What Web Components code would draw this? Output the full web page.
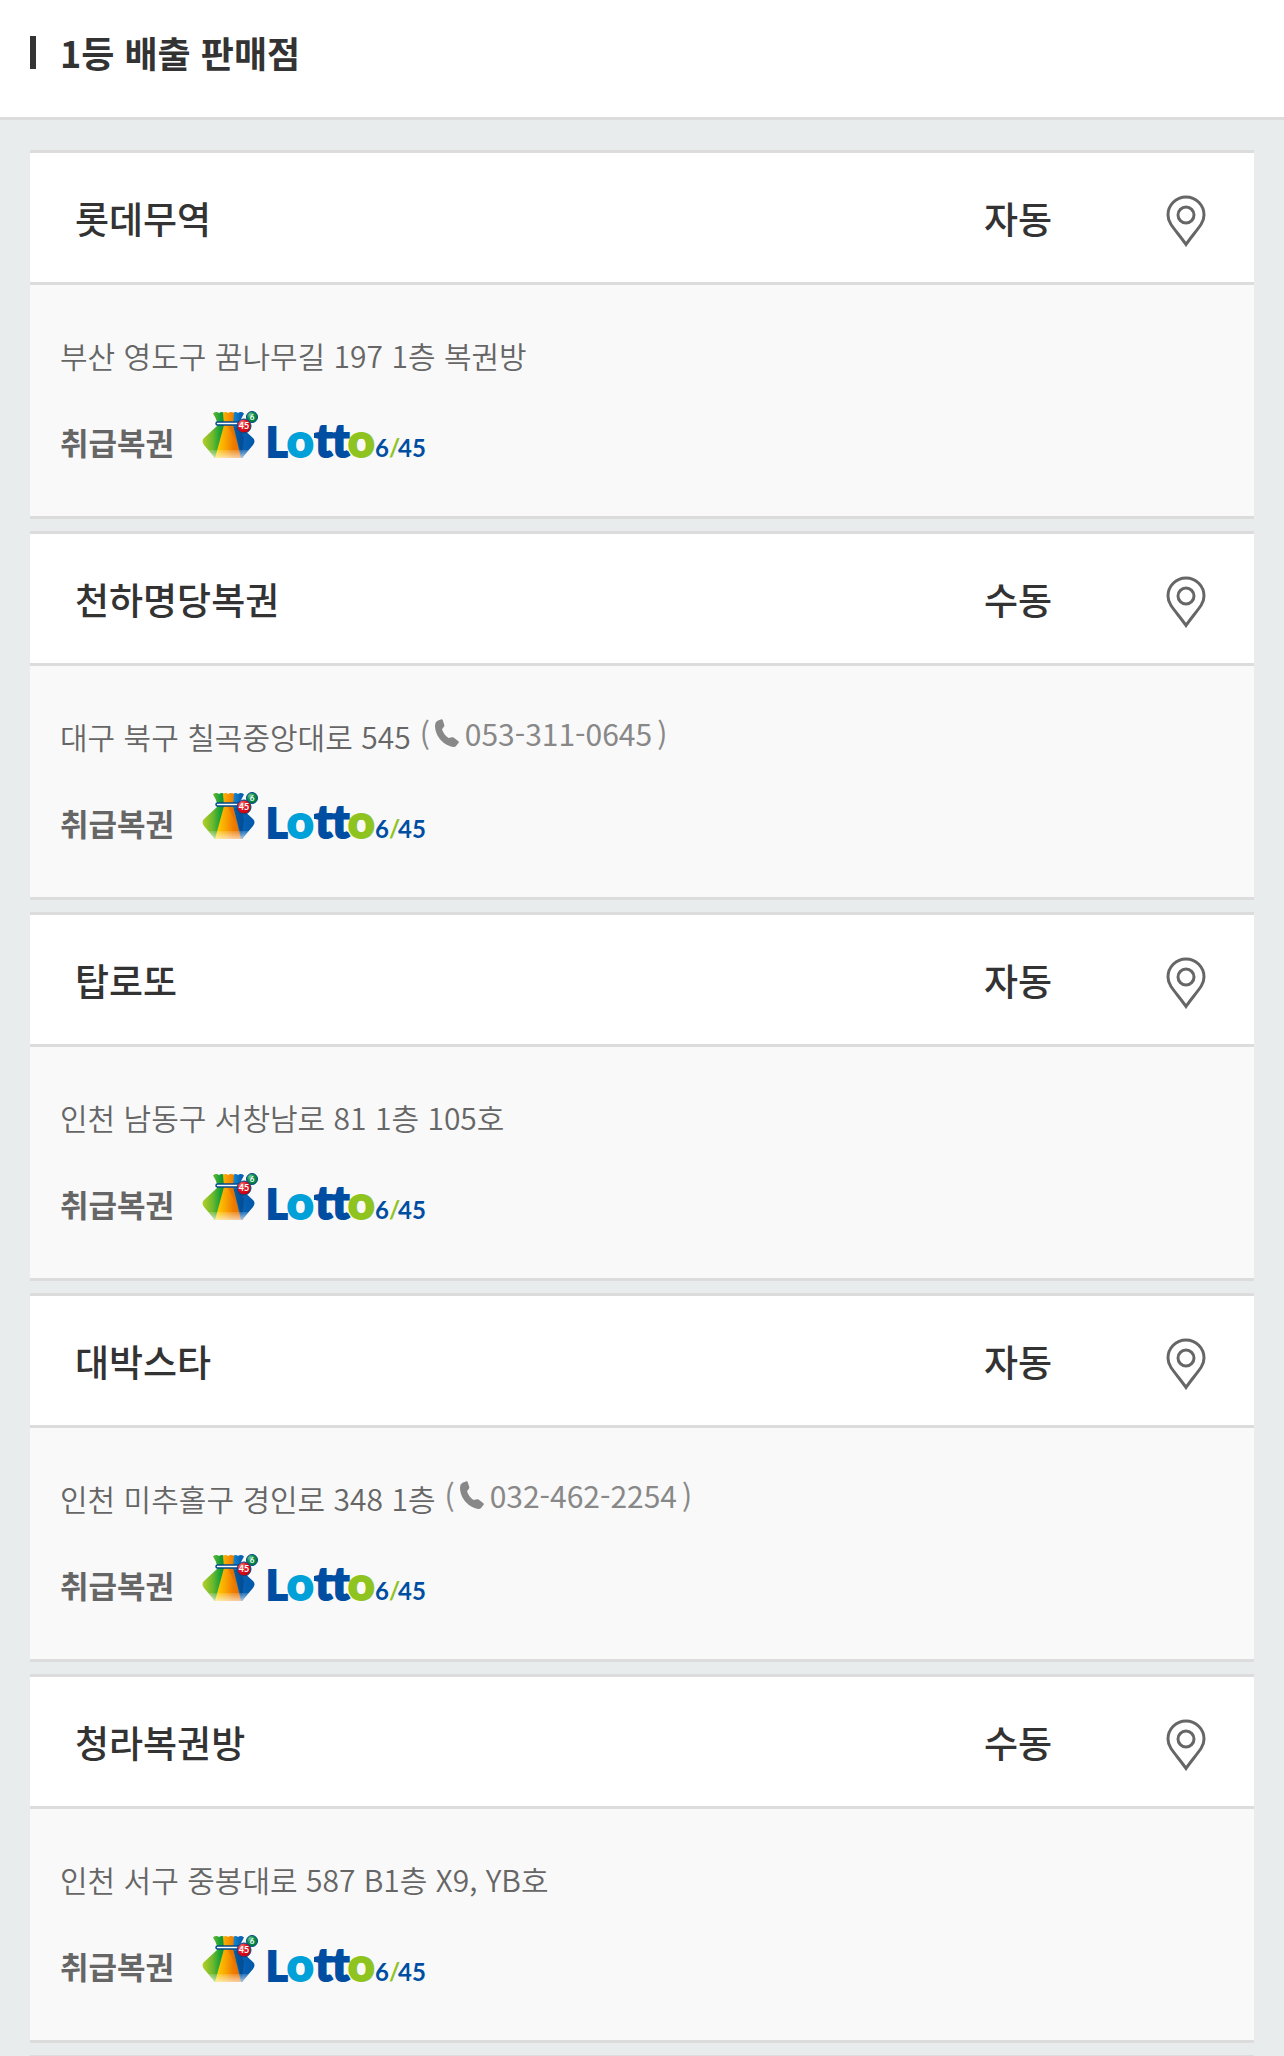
<!DOCTYPE html>
<html lang="ko">
<head>
<meta charset="utf-8">
<meta name="viewport" content="width=device-width, initial-scale=1">
<title>1등 배출 판매점</title>
<style>
  body {
    margin: 0;
    background: #e9eced;
    color: #333;
    font-family: "Noto Sans CJK KR", "Noto Sans", sans-serif;
  }
</style>
</head>
<body>
<section-title>1등 배출 판매점</section-title>

<store-list>
  <store-card type="자동">
    <span slot="name">롯데무역</span>
    <span slot="address">부산 영도구 꿈나무길 197 1층 복권방</span>
  </store-card>
  <store-card type="수동" tel="053-311-0645">
    <span slot="name">천하명당복권</span>
    <span slot="address">대구 북구 칠곡중앙대로 545</span>
  </store-card>
  <store-card type="자동">
    <span slot="name">탑로또</span>
    <span slot="address">인천 남동구 서창남로 81 1층 105호</span>
  </store-card>
  <store-card type="자동" tel="032-462-2254">
    <span slot="name">대박스타</span>
    <span slot="address">인천 미추홀구 경인로 348 1층</span>
  </store-card>
  <store-card type="수동">
    <span slot="name">청라복권방</span>
    <span slot="address">인천 서구 중봉대로 587 B1층 X9, YB호</span>
  </store-card>
</store-list>

<script>
class SectionTitle extends HTMLElement {
  constructor() {
    super();
    this.attachShadow({ mode: 'open' });
    this.shadowRoot.innerHTML = `
      <style>
        :host {
          display: block;
          padding: 28px 30px 41px;
          background: #fff;
          border-bottom: 3px solid #dcdcdc;
        }
        h2 {
          display: flex;
          align-items: center;
          gap: 24px;
          margin: 0;
          font-size: 36px;
          line-height: 48px;
          font-weight: 700;
        }
        h2::before {
          content: "";
          width: 6px;
          height: 33px;
          background: #333;
        }
      </style>
      <h2><slot></slot></h2>
    `;
  }
}

customElements.define('section-title', SectionTitle);

class StoreList extends HTMLElement {
  constructor() {
    super();
    this.attachShadow({ mode: 'open' });
    this.shadowRoot.innerHTML = `
      <style>
        :host {
          display: flex;
          flex-direction: column;
          gap: 12px;
          padding: 30px 30px 0;
        }
        .end {
          height: 1px;
          background: #dcdcdc;
        }
      </style>
      <slot></slot>
      <div class="end"></div>
    `;
  }
}

customElements.define('store-list', StoreList);

class MapButton extends HTMLElement {
  constructor() {
    super();
    this.attachShadow({ mode: 'open' });
    this.shadowRoot.innerHTML = `
      <style>
        :host {
          display: flex;
          justify-content: center;
        }
        button {
          display: flex;
          padding: 0;
          border: 0;
          background: none;
          cursor: pointer;
        }
      </style>
      <button type="button" aria-label="지도 보기">
        <svg width="40" height="58" viewBox="0 -6 40 58" fill="none" stroke="#666" stroke-width="3">
          <path d="M20 49.500C16 43.500 9.500 36 5 29.500C2.800 26.300 2 23.600 2 20C2 10 10 2 20 2S38 10 38 20C38 23.600 37.200 26.300 35 29.500C30.500 36 24 43.500 20 49.500Z"/>
          <circle cx="20" cy="20" r="8"/>
        </svg>
      </button>
    `;
  }
}

customElements.define('map-button', MapButton);

class PhoneLink extends HTMLElement {
  constructor() {
    super();
    this.attachShadow({ mode: 'open' });
  }

  static get observedAttributes() {
    return ['number'];
  }

  attributeChangedCallback(name, oldValue, newValue) {
    this.shadowRoot.innerHTML = `
      <style>
        :host {
          display: flex;
          align-items: center;
          gap: 5px;
          color: #888;
          font-size: 30px;
          line-height: 40px;
          font-weight: 400;
        }
        a {
          display: flex;
          align-items: center;
          gap: 6px;
          color: inherit;
          text-decoration: none;
        }
      </style>
      <span>(</span>
      <a href="tel:${newValue}">
        <svg width="24" height="28" viewBox="0 0 24 28" fill="#888">
          <path d="M2.500 1.700L6.500 0.200Q7.400 0 7.700 0.900L9.300 6Q9.500 7 8.900 7.700L7 10.200C8 13.500 10.500 17 13.500 19L17 18.200Q17.900 18 18.600 18.600L23.400 22.300Q24.200 23 23.500 23.900L21 27Q20.300 27.900 19 27.900C9 27 0 17.500 0 6.500Q0 3 2.500 1.700Z"/>
        </svg>
        <span>${newValue}</span>
      </a>
      <span>)</span>
    `;
  }
}

customElements.define('phone-link', PhoneLink);

class LottoLogo extends HTMLElement {
  constructor() {
    super();
    this.attachShadow({ mode: 'open' });
    this.shadowRoot.innerHTML = `
      <style>
        :host {
          display: block;
        }
        svg {
          display: block;
          overflow: visible;
        }
        text {
          font-family: Lato, sans-serif;
          font-weight: 700;
        }
        .word {
          font-weight: 900;
          stroke-width: 2px;
        }
        .navy {
          fill: #004ea2;
          stroke: #004ea2;
        }
        .sky {
          fill: #00a0d8;
          stroke: #00a0d8;
        }
        .lime {
          fill: #8fc31f;
          stroke: #8fc31f;
        }
      </style>
      <svg width="224" height="48" viewBox="0 -1 224 48" role="img" aria-label="Lotto 6/45">
        <defs>
          <linearGradient id="green" x1="0" x2="1">
            <stop offset="0" stop-color="#b5cf28"/>
            <stop offset=".45" stop-color="#6fb92c"/>
            <stop offset=".8" stop-color="#12a038"/>
            <stop offset="1" stop-color="#128a3a"/>
          </linearGradient>
          <linearGradient id="orange" x1="0" x2="1">
            <stop offset="0" stop-color="#ffd800"/>
            <stop offset=".45" stop-color="#f8a000"/>
            <stop offset=".7" stop-color="#ef7d00"/>
            <stop offset="1" stop-color="#e86c00"/>
          </linearGradient>
          <linearGradient id="blue" x1="0" x2="1">
            <stop offset="0" stop-color="#1397dc"/>
            <stop offset=".4" stop-color="#0a62b4"/>
            <stop offset="1" stop-color="#0057a8"/>
          </linearGradient>
          <linearGradient id="shine" x1="0" x2="0" y1="0" y2="1">
            <stop offset="0" stop-color="#fff" stop-opacity=".15"/>
            <stop offset="1" stop-color="#fff" stop-opacity=".65"/>
          </linearGradient>
          <radialGradient id="red" cx=".35" cy=".3" r=".7">
            <stop offset="0" stop-color="#f58a80"/>
            <stop offset=".5" stop-color="#e3121f"/>
            <stop offset="1" stop-color="#c4000f"/>
          </radialGradient>
          <radialGradient id="ball" cx=".35" cy=".3" r=".7">
            <stop offset="0" stop-color="#7cc79a"/>
            <stop offset=".5" stop-color="#0b9149"/>
            <stop offset="1" stop-color="#007a3c"/>
          </radialGradient>
        </defs>
        <path fill="url(#green)" d="M11 2.500Q14 0 17 2Q20 0 22 2L23 15L14 47H13L2 34Q-1 30 2 27L15 15V11Q14 7 11 2.500Z"/>
        <path fill="url(#blue)" d="M31 2Q34 0 36 2Q39 0 42 2.500L38 10V15L51 27Q54 30 51 34L40 47H38L29 15Z"/>
        <path fill="#004486" d="M31 15L38 17L42 26L40 45Z" opacity=".6"/>
        <path fill="url(#orange)" d="M21 2Q24 0 26 2Q29 0 32 2L31 14L39 47H13L22 14Z"/>
        <path fill="#d95f00" d="M26 15L31 14L36 34Z" opacity=".4"/>
        <path fill="url(#shine)" d="M6 39H47L40 47H13Z"/>
        <rect x="14" y="11" width="25" height="3" rx="1.500" fill="#fff" stroke="#004a8c" stroke-width="1.500"/>
        <circle cx="50" cy="6" r="5.500" fill="url(#ball)" stroke="#004a8c"/>
        <text x="50" y="9" font-size="8" fill="#fff" text-anchor="middle">6</text>
        <circle cx="42" cy="15" r="7" fill="url(#red)" stroke="#004a8c"/>
        <text x="42" y="18" font-size="9" fill="#fff" text-anchor="middle">45</text>
        <rect x="112" y="22" width="33" height="5" fill="#004ea2"/>
        <text class="word" y="46" font-size="46"><tspan class="navy" x="64" font-size="41">L</tspan><tspan class="sky" x="85">o</tspan><tspan class="navy" x="113">t</tspan><tspan class="navy" x="130">t</tspan><tspan class="lime" x="146">o</tspan></text>
        <text y="46" font-size="24" fill="#004ea2"><tspan x="173">6</tspan><tspan x="187" fill="#8fc31f">/</tspan><tspan x="196">4</tspan><tspan x="210">5</tspan></text>
      </svg>
    `;
  }
}

customElements.define('lotto-logo', LottoLogo);

class StoreCard extends HTMLElement {
  constructor() {
    super();
    this.attachShadow({ mode: 'open' });
  }

  connectedCallback() {
    const tel = this.getAttribute('tel');
    this.shadowRoot.innerHTML = `
      <style>
        :host {
          display: block;
          border: solid #dcdcdc;
          border-width: 3px 0;
          background: #f9f9f9;
        }
        header {
          display: grid;
          grid-template-columns: 1fr 200px 136px;
          align-items: center;
          height: 129px;
          background: #fff;
          border-bottom: 3px solid #dcdcdc;
          font-size: 37px;
          line-height: 48px;
          font-weight: 500;
        }
        h3 {
          margin: 0;
          padding-left: 45px;
          font: inherit;
        }
        .type {
          text-align: center;
        }
        .body {
          padding: 47px 30px 58px;
          color: #666;
        }
        .address {
          display: flex;
          align-items: flex-start;
          gap: 9px;
          font-size: 30px;
          line-height: 46px;
          font-weight: 350;
        }
        .games {
          display: flex;
          align-items: flex-end;
          gap: 28px;
          margin-top: 32px;
          font-size: 31px;
          line-height: 32px;
        }
      </style>
      <header>
        <h3><slot name="name"></slot></h3>
        <span class="type">${this.getAttribute('type')}</span>
        <map-button></map-button>
      </header>
      <div class="body">
        <div class="address">
          <slot name="address"></slot>
          ${tel ? `<phone-link number="${tel}"></phone-link>` : ''}
        </div>
        <div class="games">
          <strong>취급복권</strong>
          <lotto-logo></lotto-logo>
        </div>
      </div>
    `;
  }
}

customElements.define('store-card', StoreCard);
</script>
</body>
</html>
